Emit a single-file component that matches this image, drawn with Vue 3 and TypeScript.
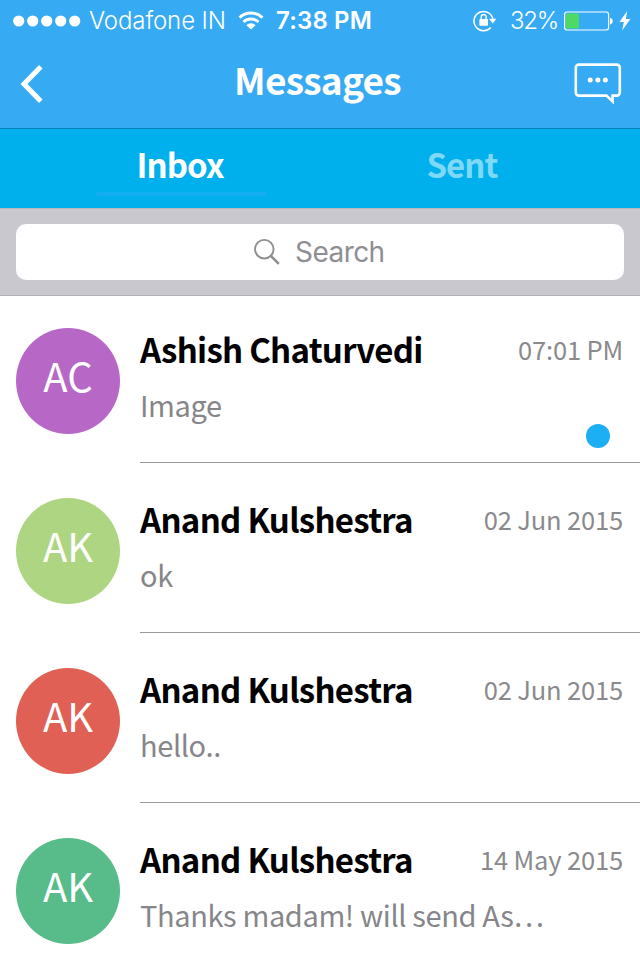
<script setup lang="ts">
interface Message {
  id: number
  initials: string
  name: string
  time: string
  preview: string
  tone: string
  unread: boolean
}

const messages: Message[] = [
  { id: 1, initials: 'AC', name: 'Ashish Chaturvedi', time: '07:01 PM', preview: 'Image', tone: 'purple', unread: true },
  { id: 2, initials: 'AK', name: 'Anand Kulshestra', time: '02 Jun 2015', preview: 'ok', tone: 'lime', unread: false },
  { id: 3, initials: 'AK', name: 'Anand Kulshestra', time: '02 Jun 2015', preview: 'hello..', tone: 'red', unread: false },
  { id: 4, initials: 'AK', name: 'Anand Kulshestra', time: '14 May 2015', preview: 'Thanks madam! will send As…', tone: 'green', unread: false },
]
</script>

<template>
  <div class="screen">
    <header class="top">
      <div class="status">
        <svg class="signal" width="68" height="12" viewBox="0 0 68 12">
          <circle v-for="n in 5" :key="n" :cx="14 * n - 8.3" cy="6" r="5.6" fill="#fff" />
        </svg>
        <span class="carrier">Vodafone IN</span>
        <svg class="wifi" width="26" height="20" viewBox="0 0 26 20">
          <g fill="none" stroke="#fff" stroke-width="3">
            <path d="M1.600 6.600a16.6 16.6 0 0 1 22.800 0" />
            <path d="M5.500 11a11.2 11.2 0 0 1 15 0" />
          </g>
          <path d="M8.4 14.2a6.5 6.5 0 0 1 9.2 0L13 18.600z" fill="#fff" />
        </svg>
        <span class="clock">7:38 PM</span>
        <svg class="lock" width="24" height="22" viewBox="0 0 24 22">
          <path d="M17.800 17.4A9.6 9.6 0 1 1 20 9.2" fill="none" stroke="#fff" stroke-width="1.5" />
          <path d="M16 8.800h7.4l-3.6 4.600z" fill="#fff" />
          <rect x="6.4" y="9" width="8.600" height="6.800" rx=".8" fill="#fff" />
          <path d="M8.2 9.500V7a2.5 2.5 0 0 1 5 0V9.500" fill="none" stroke="#fff" stroke-width="1.4" />
        </svg>
        <span class="percent">32%</span>
        <svg class="battery" width="50" height="20" viewBox="0 0 50 20">
          <rect x=".6" y="1" width="44" height="18" rx="2.4" fill="none" stroke="#fff" stroke-width="1.2" />
          <rect x="2" y="2.4" width="13" height="15.2" rx="1" fill="#4cd964" />
          <path d="M46 6.7c3.6.5 3.6 6.2 0 6.7z" fill="#fff" />
        </svg>
        <svg class="bolt" width="12" height="20" viewBox="0 0 12 20">
          <path d="M8.3 0 .4 11h4.4L3.2 19.4 11.4 8H6.8z" fill="#fff" />
        </svg>
      </div>
      <nav class="nav">
        <svg class="back" width="24" height="40" viewBox="0 0 24 40">
          <path d="M20.8 2.800 4 20l16.8 17.200" fill="none" stroke="#fff" stroke-width="5" />
        </svg>
        <h1 class="title">Messages</h1>
        <svg class="compose" width="48" height="42" viewBox="0 0 48 42">
          <path d="M4.800 1.600h38a3 3 0 0 1 3 3v25a3 3 0 0 1-3 3H38.6v5.800l-6.200-5.800H4.800a3 3 0 0 1-3-3v-25a3 3 0 0 1 3-3z" fill="none" stroke="#fff" stroke-width="2.6" />
          <circle cx="16.2" cy="17" r="2.5" fill="#fff" />
          <circle cx="23.800" cy="17" r="2.5" fill="#fff" />
          <circle cx="31.4" cy="17" r="2.5" fill="#fff" />
        </svg>
      </nav>
    </header>

    <div class="tabs">
      <div class="tab active"><span class="tab-label inbox">Inbox</span></div>
      <div class="tab"><span class="tab-label sent">Sent</span></div>
    </div>

    <div class="search-bar">
      <div class="search-field">
        <svg width="28" height="28" viewBox="0 0 28 28">
          <g fill="none" stroke="#8e8e93">
            <circle cx="11.300" cy="11.200" r="9.300" stroke-width="1.9" />
            <path d="m17.800 17.800 8 8" stroke-width="2.6" />
          </g>
        </svg>
        <span class="placeholder">Search</span>
      </div>
    </div>

    <main class="list">
      <article v-for="m in messages" :key="m.id" class="row">
        <div class="avatar" :class="m.tone"><span>{{ m.initials }}</span></div>
        <div class="body">
          <div class="line">
            <span class="name">{{ m.name }}</span>
            <time class="time">{{ m.time }}</time>
          </div>
          <p class="preview">{{ m.preview }}</p>
          <i v-if="m.unread" class="unread"></i>
        </div>
      </article>
    </main>
  </div>
</template>

<style>
body { margin: 0; overflow: hidden; }
</style>

<style scoped>
.screen {
  width: 640px;
  height: 960px;
  overflow: hidden;
  box-sizing: border-box;
  background: #fff;
  font-family: "Noto Sans CJK SC", "Noto Sans", sans-serif;
  white-space: nowrap;
}
svg { display: block; flex: none; }
.top {
  height: 128px;
  background: #37aaf4;
  border-bottom: 1px solid #0781b8;
  color: #fff;
}
.status {
  display: flex;
  align-items: center;
  height: 41px;
  padding-left: 13px;
  font: 400 24px/41px Inter, "Liberation Sans", sans-serif;
}
.carrier { width: 138px; margin-left: 8px; font-weight: 300; letter-spacing: -.1px; }
.wifi { margin-left: 11px; }
.clock { width: 98px; margin-left: 12px; font-weight: 600; letter-spacing: .15px; }
.lock { margin-left: 99px; }
.percent { width: 48px; margin-left: 13px; font-weight: 300; letter-spacing: -1.2px; }
.battery { margin-left: 6px; }
.bolt { margin-left: 5px; }
.nav {
  display: grid;
  grid-template-columns: 64px 1fr 66px;
  height: 87px;
}
.back { margin: 23px 0 0 20px; }
.title {
  margin: 0 0 0 -3px;
  text-align: center;
  font-size: 37px;
  line-height: 77px;
  font-weight: 700;
  letter-spacing: -.75px;
}
.compose { margin: 22px 0 0; }
.tabs {
  display: grid;
  grid-template-columns: 96px 170px 111px 170px;
  height: 79px;
  background: #00b0ed;
}
.tab { height: 67px; box-sizing: border-box; text-align: center; }
.tab:first-child { grid-column: 2; border-bottom: 4px solid #14adf1; border-radius: 2px; }
.tab:last-child { grid-column: 4; }
.tab-label {
  display: block;
  color: #fff;
  font-size: 33px;
  line-height: 70px;
  font-weight: 700;
  letter-spacing: -.9px;
}
.inbox { margin-left: -2px; }
.sent { color: #7fd8f6; }
.search-bar {
  height: 88px;
  box-sizing: border-box;
  padding: 15px 16px 16px;
  background: #c9c8ce;
  border-top: 1px solid #b5bac4;
  border-bottom: 1px solid #b2b1b7;
}
.search-field {
  display: flex;
  align-items: center;
  height: 56px;
  padding-left: 237px;
  border-radius: 10px;
  background: #fff;
}
.placeholder {
  margin-left: 14px;
  color: #8e8e93;
  font: 400 28px/54px Inter, "Liberation Sans", sans-serif;
  letter-spacing: -.55px;
}
.row { display: flex; height: 170px; }
.avatar {
  flex: none;
  width: 104px;
  height: 106px;
  margin: 32px 20px 0 16px;
  border-radius: 50%;
  color: #fff;
  font-size: 40px;
  line-height: 95px;
  text-align: center;
}
.purple { background: #b768c7; }
.lime { background: #aed581; }
.red { background: #e06055; }
.green { background: #57bb8a; }
.body {
  position: relative;
  flex: 1;
  height: 166px;
  border-bottom: 1px solid #98989c;
}
.line {
  display: flex;
  justify-content: space-between;
  height: 80px;
  padding: 29px 17px 0 0;
  box-sizing: border-box;
}
.name { font-size: 33px; line-height: 48px; font-weight: 700; letter-spacing: -.72px; color: #000; }
.time { font-size: 25.5px; line-height: 48px; letter-spacing: -.15px; color: #8a8a8d; }
.preview { margin: 4px 0 0; font-size: 29px; line-height: 48px; letter-spacing: -.38px; color: #86868a; }
.unread {
  position: absolute;
  right: 30px;
  bottom: 14px;
  width: 24px;
  height: 24px;
  border-radius: 50%;
  background: #1daff3;
}
</style>
